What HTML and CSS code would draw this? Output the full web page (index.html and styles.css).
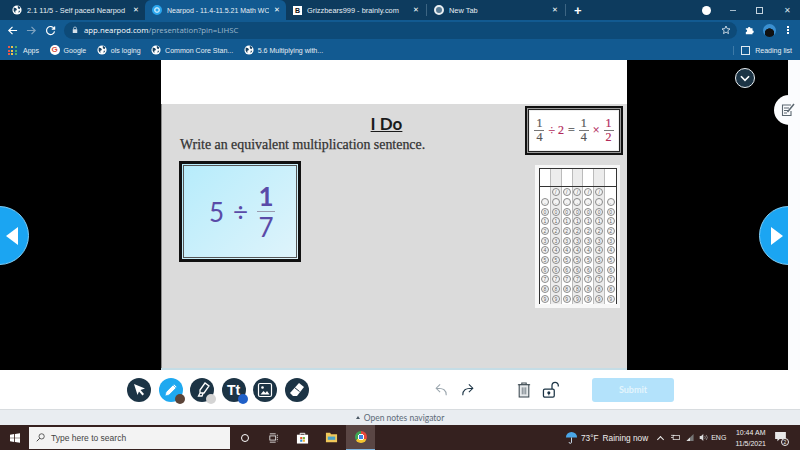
FILE: index.html
```html
<!DOCTYPE html>
<html lang="en">
<head>
    <meta charset="UTF-8">
    <title>Nearpod</title>
    <link rel="stylesheet" href="styles.css">
</head>
<body>
    <svg class="icon-defs" width="0" height="0">
        <symbol id="globe" viewBox="0 0 12 12">
            <circle cx="6" cy="6" r="5.5" fill="#fff"/>
            <path d="M2 3l3 1 1 2-2 1 0 3-2-3zM7 1l3 2-1 2-2-1zM8 7l2 0-2 3z" fill="#17405f"/>
        </symbol>
    </svg>

    <div class="tabstrip">
        <div class="tab">
            <svg class="fav"><use href="#globe"/></svg>
            <span class="tab-title">2.1 11/5 - Self paced Nearpod</span>
            <span class="tab-x">✕</span>
        </div>
        <div class="tab active">
            <span class="fav-np"></span>
            <span class="tab-title">Nearpod - 11.4-11.5.21 Math WC</span>
            <span class="tab-x">✕</span>
        </div>
        <div class="tab sep">
            <span class="fav-b">B</span>
            <span class="tab-title">Grizzbears999 - brainly.com</span>
            <span class="tab-x">✕</span>
        </div>
        <div class="tab newtab sep">
            <span class="fav-chrome"></span>
            <span class="tab-title">New Tab</span>
            <span class="tab-x">✕</span>
        </div>
        <div class="plus">+</div>
        <div class="win-controls">
            <span class="media-dot"></span>
            <span class="win-min"></span>
            <span class="win-max"></span>
            <span class="win-close">✕</span>
        </div>
    </div>

    <div class="toolbar">
        <svg class="nav-icon" viewBox="0 0 12 12"><path d="M11 6H2M6 2L2 6l4 4" fill="none" stroke="#fff" stroke-width="1.3"/></svg>
        <svg class="nav-icon" viewBox="0 0 12 12"><path d="M1 6h9M6 2l4 4-4 4" fill="none" stroke="#7fa3c0" stroke-width="1.3"/></svg>
        <svg class="nav-icon" viewBox="0 0 12 12"><path d="M10 4A4.4 4.4 0 1 0 10.4 7M10.5 1.5V4.6H7.4" fill="none" stroke="#fff" stroke-width="1.3"/></svg>
        <div class="omnibox">
            <svg class="lock" viewBox="0 0 8 10"><path d="M2 4V3a2 2 0 0 1 4 0v1" fill="none" stroke="#d5e0ea"/><rect x="1" y="4" width="6" height="5" fill="#d5e0ea"/></svg>
            <span class="url"><b>app.nearpod.com</b>/presentation?pin=LIHSC</span>
            <svg class="star" viewBox="0 0 12 12"><path d="M6 1.2l1.4 3.2 3.4.3-2.6 2.2.8 3.4L6 8.5l-3 1.8.8-3.4L1.200 4.700l3.400-.3z" fill="none" stroke="#e4ecf2"/></svg>
        </div>
        <svg class="puzzle" viewBox="0 0 12 12"><path d="M1 4h2.500a1.500 1.500 0 0 1 3 0H9v2.500a1.500 1.500 0 0 1 0 3V11H1V8.500a1.500 1.500 0 0 0 0-3z" fill="#fff"/></svg>
        <span class="avatar"></span>
        <span class="kebab"></span>
    </div>

    <div class="bookmarks">
        <span class="bm bm-apps"><span class="apps-grid"></span>Apps</span>
        <span class="bm"><span class="fav-g">G</span>Google</span>
        <span class="bm"><svg class="fav"><use href="#globe"/></svg>ols loging</span>
        <span class="bm"><svg class="fav"><use href="#globe"/></svg>Common Core Stan...</span>
        <span class="bm"><svg class="fav"><use href="#globe"/></svg>5.6 Multiplying with...</span>
        <span class="reading"><span class="reading-icon"></span>Reading list</span>
    </div>

    <div class="stage">
        <div class="slide">
            <div class="slide-head"></div>
            <div class="slide-body">
                <div class="left-col">
                    <h1>I Do</h1>
                    <p class="prompt">Write an equivalent multiplication sentence.</p>
                    <div class="problem">
                        <span>5</span>
                        <span class="div-sign">÷</span>
                        <span class="frac"><span class="one">1</span><span class="seven">7</span></span>
                    </div>
                </div>
                <div class="right-col">
                    <div class="example">
                        <span class="ex-frac"><span>1</span><span>4</span></span>
                        <span class="red">÷ 2</span>
                        <span>=</span>
                        <span class="ex-frac"><span>1</span><span>4</span></span>
                        <span class="red">×</span>
                        <span class="ex-frac red"><span>1</span><span>2</span></span>
                    </div>
                    <div class="griddable">
                        <div class="grid-sheet">
                            <div class="head-row"><i></i><i class="tint"></i><i></i><i class="tint"></i><i></i><i class="tint"></i><i></i></div>
                            <div class="row slashes"><i></i><i class="tint"><b>/</b></i><i><b>/</b></i><i class="tint"><b>/</b></i><i><b>/</b></i><i class="tint"><b>/</b></i><i></i></div>
                            <div class="row"><i><b>.</b></i><i class="tint"><b>.</b></i><i><b>.</b></i><i class="tint"><b>.</b></i><i><b>.</b></i><i class="tint"><b>.</b></i><i><b>.</b></i></div>
                            <div class="row"><i><b>0</b></i><i class="tint"><b>0</b></i><i><b>0</b></i><i class="tint"><b>0</b></i><i><b>0</b></i><i class="tint"><b>0</b></i><i><b>0</b></i></div>
                            <div class="row"><i><b>1</b></i><i class="tint"><b>1</b></i><i><b>1</b></i><i class="tint"><b>1</b></i><i><b>1</b></i><i class="tint"><b>1</b></i><i><b>1</b></i></div>
                            <div class="row"><i><b>2</b></i><i class="tint"><b>2</b></i><i><b>2</b></i><i class="tint"><b>2</b></i><i><b>2</b></i><i class="tint"><b>2</b></i><i><b>2</b></i></div>
                            <div class="row"><i><b>3</b></i><i class="tint"><b>3</b></i><i><b>3</b></i><i class="tint"><b>3</b></i><i><b>3</b></i><i class="tint"><b>3</b></i><i><b>3</b></i></div>
                            <div class="row"><i><b>4</b></i><i class="tint"><b>4</b></i><i><b>4</b></i><i class="tint"><b>4</b></i><i><b>4</b></i><i class="tint"><b>4</b></i><i><b>4</b></i></div>
                            <div class="row"><i><b>5</b></i><i class="tint"><b>5</b></i><i><b>5</b></i><i class="tint"><b>5</b></i><i><b>5</b></i><i class="tint"><b>5</b></i><i><b>5</b></i></div>
                            <div class="row"><i><b>6</b></i><i class="tint"><b>6</b></i><i><b>6</b></i><i class="tint"><b>6</b></i><i><b>6</b></i><i class="tint"><b>6</b></i><i><b>6</b></i></div>
                            <div class="row"><i><b>7</b></i><i class="tint"><b>7</b></i><i><b>7</b></i><i class="tint"><b>7</b></i><i><b>7</b></i><i class="tint"><b>7</b></i><i><b>7</b></i></div>
                            <div class="row"><i><b>8</b></i><i class="tint"><b>8</b></i><i><b>8</b></i><i class="tint"><b>8</b></i><i><b>8</b></i><i class="tint"><b>8</b></i><i><b>8</b></i></div>
                            <div class="row"><i><b>9</b></i><i class="tint"><b>9</b></i><i><b>9</b></i><i class="tint"><b>9</b></i><i><b>9</b></i><i class="tint"><b>9</b></i><i><b>9</b></i></div>
                        </div>
                    </div>
                </div>
            </div>
        </div>

        <!-- overlays on the stage -->
        <span class="arrow-btn prev"></span>
        <span class="arrow-btn next"></span>
        <span class="collapse">
            <svg viewBox="0 0 20 20"><path d="M5.500 8l4.500 4.500L14.500 8" fill="none" stroke="#fff" stroke-width="1.800"/></svg>
        </span>
        <span class="notes-tab">
            <svg viewBox="0 0 14 14"><path d="M10 2H1.500v10.500H10V8" fill="none" stroke="#5c6770" stroke-width="1.100"/><path d="M3 5h5M3 7.500h4M3 10h3" stroke="#5c6770"/><path d="M6.500 9l6.500-8" stroke="#5c6770" stroke-width="1.500"/></svg>
        </span>
    </div>

    <div class="tools">
        <div class="tool-group">
            <span class="tool">
                <svg viewBox="0 0 24 24"><path d="M7 6l11 4.500-4.500 1.500 3.500 4-1.500 1.500-3.500-4L10.500 17z" fill="#fff"/></svg>
            </span>
            <span class="tool on">
                <svg viewBox="0 0 24 24"><path d="M6 18l1-4 8-8 3 3-8 8zM14 7l3 3" fill="#fff" stroke="#1fa9f0" stroke-width=".7"/></svg>
                <span class="dot brown"></span>
            </span>
            <span class="tool">
                <svg viewBox="0 0 24 24"><path d="M10 12l5-7 4 3-5 7-4 0zM10 15l-1.500 3 3.500 0 1-2.500" fill="none" stroke="#fff" stroke-width="1.300"/></svg>
                <span class="dot grey"></span>
            </span>
            <span class="tool tool-tt">Tt<span class="dot blue"></span></span>
            <span class="tool">
                <svg viewBox="0 0 24 24"><rect x="5.500" y="5.500" width="13" height="13" rx="1.500" fill="none" stroke="#fff" stroke-width="1.200"/><circle cx="9.500" cy="9.500" r="1.300" fill="#fff"/><path d="M7.500 16.500l3-3.500 2 2 1.500-2 2.500 3.500z" fill="#fff"/></svg>
            </span>
            <span class="tool">
                <svg viewBox="0 0 24 24"><path d="M14 5l5 4-7 9H8l-3-3z" fill="#fff"/><path d="M9.500 9.500l5 4" stroke="#1c3445" stroke-width="1"/></svg>
            </span>
        </div>
        <div class="undo-group">
            <svg class="action" viewBox="0 0 16 16"><path d="M14 14c0-6-3-8-11-8M7 1.500L2.500 6 7 10.500" fill="none" stroke="#9aa5ad" stroke-width="1.200"/></svg>
            <svg class="action" viewBox="0 0 16 16"><path d="M2 14c0-6 3-8 11-8M9 1.500L13.500 6 9 10.500" fill="none" stroke="#1c3445" stroke-width="1.200"/></svg>
        </div>
        <div class="edit-group">
            <svg class="action tall" viewBox="0 0 16 20"><path d="M1 4h14M5.500 4V2h5v2" fill="none" stroke="#3c4850" stroke-width="1.200"/><rect x="2.500" y="4" width="11" height="14" fill="#e6e9eb" stroke="#3c4850" stroke-width="1.200"/><path d="M6 7v8M8 7v8M10 7v8" stroke="#6b767e"/></svg>
            <svg class="action wide" viewBox="0 0 22 20"><path d="M11 9V5a3.500 3.500 0 0 1 7 0v1" fill="none" stroke="#1c3445" stroke-width="1.400"/><rect x="1.500" y="9" width="12" height="9" rx="1.500" fill="#fff" stroke="#1c3445" stroke-width="1.400"/><circle cx="7.500" cy="13" r="1.700" fill="#1c3445"/><rect x="7" y="13" width="1" height="3" fill="#1c3445"/></svg>
        </div>
        <button class="submit">Submit</button>
    </div>

    <div class="notes-bar"><span class="notes-caret"></span>Open notes navigator</div>

    <div class="taskbar">
        <span class="start">
            <svg viewBox="0 0 12 12"><path d="M0 2l5-.7v4.300H0zM6 1.200L12 .4v5.200H6zM0 6.400h5v4.300L0 10zM6 6.400h6v5.200l-6-.8z" fill="#fff"/></svg>
        </span>
        <div class="search">
            <svg viewBox="0 0 12 12"><circle cx="7.500" cy="4.500" r="3.500" fill="none" stroke="#333"/><path d="M5 7l-4 4" stroke="#333" stroke-width="1.200"/></svg>
            Type here to search
        </div>
        <div class="task-icons">
            <span class="task"><span class="cortana"></span></span>
            <span class="task">
                <svg class="tv" viewBox="0 0 12 12"><path d="M1 1h7M1 11h7" stroke="#eee"/><rect x="1" y="3.500" width="7" height="5" fill="none" stroke="#eee"/><path d="M10 2v8" stroke="#eee" stroke-dasharray="1.500 1"/></svg>
            </span>
            <span class="task">
                <svg class="tv big" viewBox="0 0 14 14"><path d="M4.500 4V2.500h5V4" fill="none" stroke="#fff"/><rect x="1" y="4" width="12" height="9.500" fill="#fff"/><rect x="4.500" y="6.500" width="2.300" height="2.300" fill="#e8562a"/><rect x="7.300" y="6.500" width="2.300" height="2.300" fill="#6fb33f"/><rect x="4.500" y="9.300" width="2.300" height="2.300" fill="#2a8fd8"/><rect x="7.300" y="9.300" width="2.300" height="2.300" fill="#f2b632"/></svg>
            </span>
            <span class="task">
                <svg class="tv big" viewBox="0 0 14 14"><path d="M1 2h4.500l1 1.500H13V12H1z" fill="#f0c85a"/><rect x="3" y="6" width="8" height="3.500" fill="#4aa3c9"/></svg>
            </span>
            <span class="task running"><span class="chrome-big"></span></span>
        </div>
        <div class="tray">
            <svg class="umbrella" viewBox="0 0 14 14"><path d="M1 7a6 6 0 0 1 12 0z" fill="#4aa7e8"/><path d="M7 7v5a1.300 1.300 0 0 1-2.600 0" fill="none" stroke="#cfe3f2"/></svg>
            <span class="weather">73°F</span>
            <span class="weather">Raining now</span>
            <span class="chev"></span>
            <svg class="tray-icon" viewBox="0 0 14 12"><rect x="3" y="3" width="9" height="6" fill="none" stroke="#eee"/><path d="M0 3h5M0 6h3" stroke="#eee"/></svg>
            <svg class="tray-icon" viewBox="0 0 14 12"><path d="M2 11L12 1v10z" fill="#777"/><path d="M2 11L7 6v5z" fill="#ddd"/></svg>
            <svg class="tray-icon" viewBox="0 0 14 12"><path d="M1 4h2l3-3v10L3 8H1z" fill="#ddd"/><path d="M8 4a3 3 0 0 1 0 4M10 2.500a5 5 0 0 1 0 7" fill="none" stroke="#aaa"/></svg>
            <span class="lang">ENG</span>
            <span class="clock"><span>10:44 AM</span><span>11/5/2021</span></span>
            <span class="notif">
                <svg viewBox="0 0 14 13"><path d="M0 0h14v9H6l-3 3V9H0z" fill="#e8e8e8"/></svg>
                <span class="notif-count">2</span>
            </span>
        </div>
    </div>
</body>
</html>
```
FILE: styles.css
```css
* {
    box-sizing: border-box;
    margin: 0;
    padding: 0;
}

html, body {
    width: 800px;
    height: 450px;
    overflow: hidden;
}

body {
    font-family: 'Liberation Sans', sans-serif;
    background: #000;
    display: flex;
    flex-direction: column;
}

.icon-defs {
    position: absolute;
}

/* tab strip */
.tabstrip {
    height: 20px;
    background: #0d3b5e;
    display: flex;
    align-items: center;
    color: #e6eef4;
    font-size: 7.400px;
    padding-left: 4px;
    flex-shrink: 0;
}

.tab {
    width: 141px;
    height: 20px;
    display: flex;
    align-items: center;
    gap: 5px;
    padding-left: 8px;
    padding-right: 6px;
    white-space: nowrap;
}

.tab.active {
    background: #125a91;
    border-radius: 6px 6px 0 0;
    padding-left: 7px;
    font-size: 7px;
}

.tab.sep {
    width: 140px;
    padding-left: 7px;
    padding-right: 7px;
}

.tab.newtab {
    border-left: 1px solid #3d6583;
    border-right: 1px solid #3d6583;
    height: 12px;
}

.tab-title {
    flex: 1;
    overflow: hidden;
}

.tab-x {
    font-size: 7px;
    color: #fff;
}

.fav {
    width: 10px;
    height: 10px;
    flex-shrink: 0;
}

.fav-np {
    width: 10px;
    height: 10px;
    border-radius: 50%;
    background: #2aa6ee;
    border: 2.500px solid #2aa6ee;
    box-shadow: inset 0 0 0 1.500px #bfe6fb;
    flex-shrink: 0;
}

.fav-b {
    width: 9px;
    height: 9px;
    background: #fff;
    color: #111;
    font-size: 7px;
    font-weight: 700;
    line-height: 9px;
    text-align: center;
    flex-shrink: 0;
}

.fav-chrome {
    width: 10px;
    height: 10px;
    border-radius: 50%;
    background: #567a94;
    border: 2px solid #e8eef2;
    flex-shrink: 0;
}

.plus {
    margin-left: 8px;
    font-size: 13px;
    font-weight: 700;
    color: #fff;
}

.win-controls {
    margin-left: auto;
    display: flex;
    align-items: center;
    height: 20px;
}

.media-dot {
    width: 9px;
    height: 9px;
    border-radius: 50%;
    background: #fff;
    margin-right: 19px;
}

.win-min {
    width: 6px;
    height: 1px;
    background: #a7bccb;
    margin-right: 20px;
}

.win-max {
    width: 7px;
    height: 7px;
    border: 1px solid #c4d3de;
    margin-right: 21px;
}

.win-close {
    font-size: 8px;
    color: #d7e2ea;
    margin-right: 9px;
}

/* address bar */
.toolbar {
    height: 20px;
    background: #125a91;
    display: flex;
    align-items: center;
    padding-left: 7px;
    flex-shrink: 0;
}

.nav-icon {
    width: 11px;
    height: 11px;
    margin-right: 8px;
    flex-shrink: 0;
}

.omnibox {
    width: 673px;
    height: 17px;
    border-radius: 9px;
    background: #0d4a78;
    display: flex;
    align-items: center;
    padding-left: 8px;
    padding-right: 6px;
    font-family: 'Open Sans', sans-serif;
    font-size: 7.800px;
    color: #9db8cc;
}

.lock {
    width: 6px;
    height: 8px;
    margin-right: 6px;
}

.url b {
    font-weight: 400;
    color: #fff;
}

.star {
    width: 10px;
    height: 10px;
    margin-left: auto;
}

.puzzle {
    width: 10px;
    height: 10px;
    margin-left: 8px;
}

.avatar {
    width: 13px;
    height: 13px;
    border-radius: 50%;
    background: radial-gradient(circle at 50% 70%, #111 0 40%, #3a8fd0 45%);
    margin-left: 8px;
}

.kebab {
    width: 2px;
    height: 2px;
    background: #fff;
    box-shadow: 0 -3px 0 #fff, 0 3px 0 #fff;
    margin-left: 11px;
}

/* bookmarks */
.bookmarks {
    height: 20px;
    background: #125a91;
    display: flex;
    align-items: center;
    padding-left: 8px;
    font-size: 7.050px;
    color: #e6eef4;
    flex-shrink: 0;
}

.bm {
    display: flex;
    align-items: center;
    gap: 4px;
    margin-right: 10.500px;
    white-space: nowrap;
}

.bm-apps {
    gap: 6px;
}

.apps-grid {
    width: 9px;
    height: 9px;
    background:
        linear-gradient(90deg, #e9574a 0 33%, #f2c14e 33% 66%, #4fb06d 66%) 0 0 / 9px 9px,
        #125a91;
    -webkit-mask: repeating-linear-gradient(90deg, #000 0 2px, transparent 2px 3.500px),
        repeating-linear-gradient(0deg, #000 0 2px, transparent 2px 3.500px);
    -webkit-mask-composite: source-in;
}

.fav-g {
    width: 10px;
    height: 10px;
    border-radius: 50%;
    background: #fff;
    color: #d9503f;
    font-size: 8px;
    font-weight: 700;
    line-height: 10px;
    text-align: center;
}

.reading {
    margin-left: auto;
    padding-left: 7px;
    margin-right: 8px;
    border-left: 1px solid #3d7aa8;
    display: flex;
    align-items: center;
    gap: 5px;
    white-space: nowrap;
}

.reading-icon {
    width: 9px;
    height: 9px;
    border: 1px solid #dfe9f0;
}

/* presentation */
.stage {
    height: 310px;
    position: relative;
    background: #000;
    border-right: 12px solid #fbfcfe;
    flex-shrink: 0;
}

.slide {
    width: 466px;
    height: 310px;
    margin-left: 161px;
    background: #fff;
    display: flex;
    flex-direction: column;
    border-bottom: 2px solid #c5dde6;
}

.slide-head {
    height: 44px;
    flex-shrink: 0;
}

.slide-body {
    flex: 1;
    background: #dbdbdb;
    display: flex;
    border-left: 1px solid #8c8c8c;
    padding-left: 16px;
}

.left-col {
    width: 346px;
}

h1 {
    font-family: 'Lato', 'Liberation Sans', sans-serif;
    font-size: 17px;
    font-weight: 700;
    line-height: 20px;
    text-decoration: underline;
    text-align: center;
    color: #1a1a1a;
    padding-top: 10px;
    height: 31px;
    padding-left: 71px;
}

.prompt {
    font-family: 'Liberation Serif', serif;
    font-size: 13.900px;
    line-height: 18px;
    color: #333;
    padding-left: 2px;
    -webkit-text-stroke: .25px #333;
    margin-top: 1px;
}

.problem {
    width: 122px;
    height: 101px;
    margin-top: 7px;
    margin-left: 1px;
    border: 3px solid #111;
    outline: 1px solid #555;
    outline-offset: -5px;
    background: linear-gradient(135deg, #b6ecfb, #dff4fb);
    color: #5a4ba8;
    font-family: 'Lato', 'Liberation Sans', sans-serif;
    font-size: 26px;
    display: flex;
    align-items: center;
    justify-content: center;
    gap: 9px;
    padding-left: 4px;
}

.div-sign {
    font-size: 26px;
}

.frac {
    display: flex;
    flex-direction: column;
    align-items: center;
    width: 18px;
    line-height: 26px;
}

.one {
    font-weight: 700;
    border-bottom: 1px solid #9a9ab0;
    width: 100%;
    text-align: center;
    padding-bottom: 2px;
}

.seven {
    padding-top: 2px;
}

.right-col {
    margin-left: 1px;
    display: flex;
    flex-direction: column;
    width: 98px;
    padding-top: 2px;
}

.example {
    width: 98px;
    height: 49px;
    border: 2px solid #111;
    background: #fff;
    box-shadow: inset 0 0 0 1px #999, inset 0 0 0 2px #222, inset 0 0 0 3px #eee;
    display: flex;
    align-items: center;
    justify-content: center;
    gap: 4px;
    font-family: 'Liberation Serif', serif;
    font-size: 12px;
    color: #555;
    -webkit-text-stroke: .2px;
}

.red {
    color: #b22a5b;
}

.ex-frac {
    display: flex;
    flex-direction: column;
    align-items: center;
    line-height: 13px;
}

.ex-frac span:first-child {
    border-bottom: 1px solid #777;
    padding: 0 2px;
}

.griddable {
    margin-top: 10px;
    margin-left: 10px;
    width: 85px;
    height: 143px;
    background: #f7f7f7;
    padding: 3px 3px 4px 4px;
}

.grid-sheet {
    border: 1px solid #333;
    height: 136px;
}

.head-row {
    display: grid;
    grid-template-columns: repeat(7, 1fr);
    height: 18px;
    border-bottom: 1px solid #333;
}

.head-row i, .row i {
    border-right: 1px solid #bbb;
    display: flex;
    align-items: center;
    justify-content: center;
    font-style: normal;
    background: #fff;
}

.head-row i:last-child, .row i:last-child {
    border-right: 0;
}

.head-row i.tint, .row i.tint {
    background: #ececec;
}

.row {
    display: grid;
    grid-template-columns: repeat(7, 1fr);
    height: 9.700px;
}

.slashes {
    height: 10px;
}

.row b {
    width: 8px;
    height: 8px;
    border: 1px solid #8a8a8a;
    border-radius: 50%;
    font-size: 5px;
    font-weight: 400;
    line-height: 6px;
    text-align: center;
    color: #666;
    background: #f4f4f4;
}

/* overlays */
.arrow-btn {
    position: absolute;
    top: 146px;
    width: 59px;
    height: 59px;
    border-radius: 50%;
    background: #1ba5f2;
    border: 1px solid #7fcdf6;
}

.arrow-btn::after {
    content: "";
    position: absolute;
    top: 20px;
}

.prev {
    left: -30px;
}

.prev::after {
    left: 35px;
    border: 9px solid transparent;
    border-left: 0;
    border-right: 12px solid #fff;
}

.next {
    left: 759px;
    clip-path: inset(0 30px 0 0);
}

.next::after {
    left: 11px;
    border: 9px solid transparent;
    border-right: 0;
    border-left: 12px solid #fff;
}

.collapse {
    position: absolute;
    left: 735px;
    top: 8px;
    width: 20px;
    height: 20px;
    border-radius: 50%;
    background: #1c3445;
    border: 1px solid #e8eef2;
}

.collapse svg {
    display: block;
    width: 18px;
    height: 18px;
}

.notes-tab {
    position: absolute;
    left: 774px;
    top: 35px;
    width: 26px;
    height: 30px;
    border-radius: 15px 0 0 15px;
    background: #fbfcfe;
    display: flex;
    align-items: center;
    padding-left: 7px;
}

.notes-tab svg {
    width: 14px;
    height: 14px;
}

/* drawing tools */
.tools {
    height: 40px;
    background: #fff;
    display: flex;
    align-items: center;
    border-bottom: 1px solid #d8dcdf;
    padding-left: 127px;
    flex-shrink: 0;
}

.tool-group {
    display: flex;
    gap: 7.500px;
    width: 307px;
}

.tool {
    width: 24px;
    height: 24px;
    border-radius: 50%;
    background: #1c3445;
    position: relative;
    color: #fff;
}

.tool svg {
    display: block;
    width: 24px;
    height: 24px;
}

.tool.on {
    background: #1fa9f0;
}

.tool-tt {
    font-size: 14px;
    font-weight: 700;
    line-height: 24px;
    text-align: center;
}

.dot {
    position: absolute;
    right: -2px;
    bottom: -2px;
    width: 10px;
    height: 10px;
    border-radius: 50%;
}

.brown { background: #5b4438; }
.grey { background: #d4d4d4; }
.blue { background: #2060c8; }

.undo-group {
    display: flex;
    gap: 13px;
    width: 83px;
}

.edit-group {
    display: flex;
    align-items: center;
    gap: 11px;
    width: 75px;
}

.action {
    width: 14px;
    height: 14px;
}

.action.tall {
    width: 14px;
    height: 18px;
}

.action.wide {
    width: 20px;
    height: 18px;
}

.submit {
    width: 82px;
    height: 24px;
    border: none;
    border-radius: 3px;
    background: #b3e2fb;
    color: #e4f5fd;
    font-family: 'Lato', sans-serif;
    font-size: 9px;
    font-weight: 700;
}

/* notes bar */
.notes-bar {
    height: 15px;
    background: #e9edf1;
    color: #5c6a78;
    font-family: 'Lato', sans-serif;
    font-size: 8.500px;
    display: flex;
    align-items: center;
    justify-content: center;
    gap: 4px;
    flex-shrink: 0;
}

.notes-caret {
    width: 0;
    height: 0;
    border: 2.500px solid transparent;
    border-top: 0;
    border-bottom: 3px solid #4a5763;
}

/* windows taskbar */
.taskbar {
    height: 25px;
    background: #35211f;
    display: flex;
    align-items: center;
    flex-shrink: 0;
    color: #eee;
}

.start {
    width: 29px;
    height: 25px;
    display: flex;
    align-items: center;
    justify-content: center;
}

.start svg {
    width: 10px;
    height: 10px;
}

.search {
    width: 201px;
    height: 22px;
    background: #f3f3f3;
    color: #444;
    font-size: 8.500px;
    display: flex;
    align-items: center;
    gap: 6px;
    padding-left: 7px;
}

.search svg {
    width: 9px;
    height: 9px;
}

.task-icons {
    display: flex;
}

.task {
    width: 29px;
    height: 25px;
    display: flex;
    align-items: center;
    justify-content: center;
}

.task.running {
    background: #5a4644;
    border-bottom: 1px solid #7fb6e0;
}

.cortana {
    width: 8px;
    height: 8px;
    border: 1.500px solid #fff;
    border-radius: 50%;
}

.tv {
    width: 10px;
    height: 10px;
}

.tv.big {
    width: 13px;
    height: 13px;
}

.chrome-big {
    width: 12px;
    height: 12px;
    border-radius: 50%;
    background: radial-gradient(circle, #3f87e0 0 28%, #fff 30% 38%, transparent 40%), conic-gradient(#e5493a 0 33%, #f4c430 33% 66%, #3fa654 66%);
}

.tray {
    margin-left: auto;
    display: flex;
    align-items: center;
    font-size: 8.300px;
    white-space: nowrap;
    padding-right: 14px;
}

.umbrella {
    width: 13px;
    height: 13px;
    margin-right: 3px;
}

.weather {
    margin-right: 4px;
}

.chev {
    width: 5px;
    height: 5px;
    border-left: 1px solid #eee;
    border-top: 1px solid #eee;
    transform: rotate(45deg);
    margin: 3px 8px 0 6px;
}

.tray-icon {
    width: 10px;
    height: 9px;
    margin-right: 4px;
}

.lang {
    font-size: 7px;
    margin-left: -2px;
    margin-right: 9px;
}

.clock {
    display: flex;
    flex-direction: column;
    align-items: center;
    font-size: 7px;
    line-height: 11px;
    margin-right: 9px;
}

.notif {
    position: relative;
    width: 11px;
    height: 11px;
}

.notif svg {
    display: block;
    width: 11px;
    height: 10px;
}

.notif-count {
    position: absolute;
    right: -3px;
    bottom: -3px;
    width: 8px;
    height: 8px;
    border-radius: 50%;
    background: #35211f;
    border: 1px solid #eee;
    font-size: 5px;
    line-height: 6px;
    text-align: center;
}
```
